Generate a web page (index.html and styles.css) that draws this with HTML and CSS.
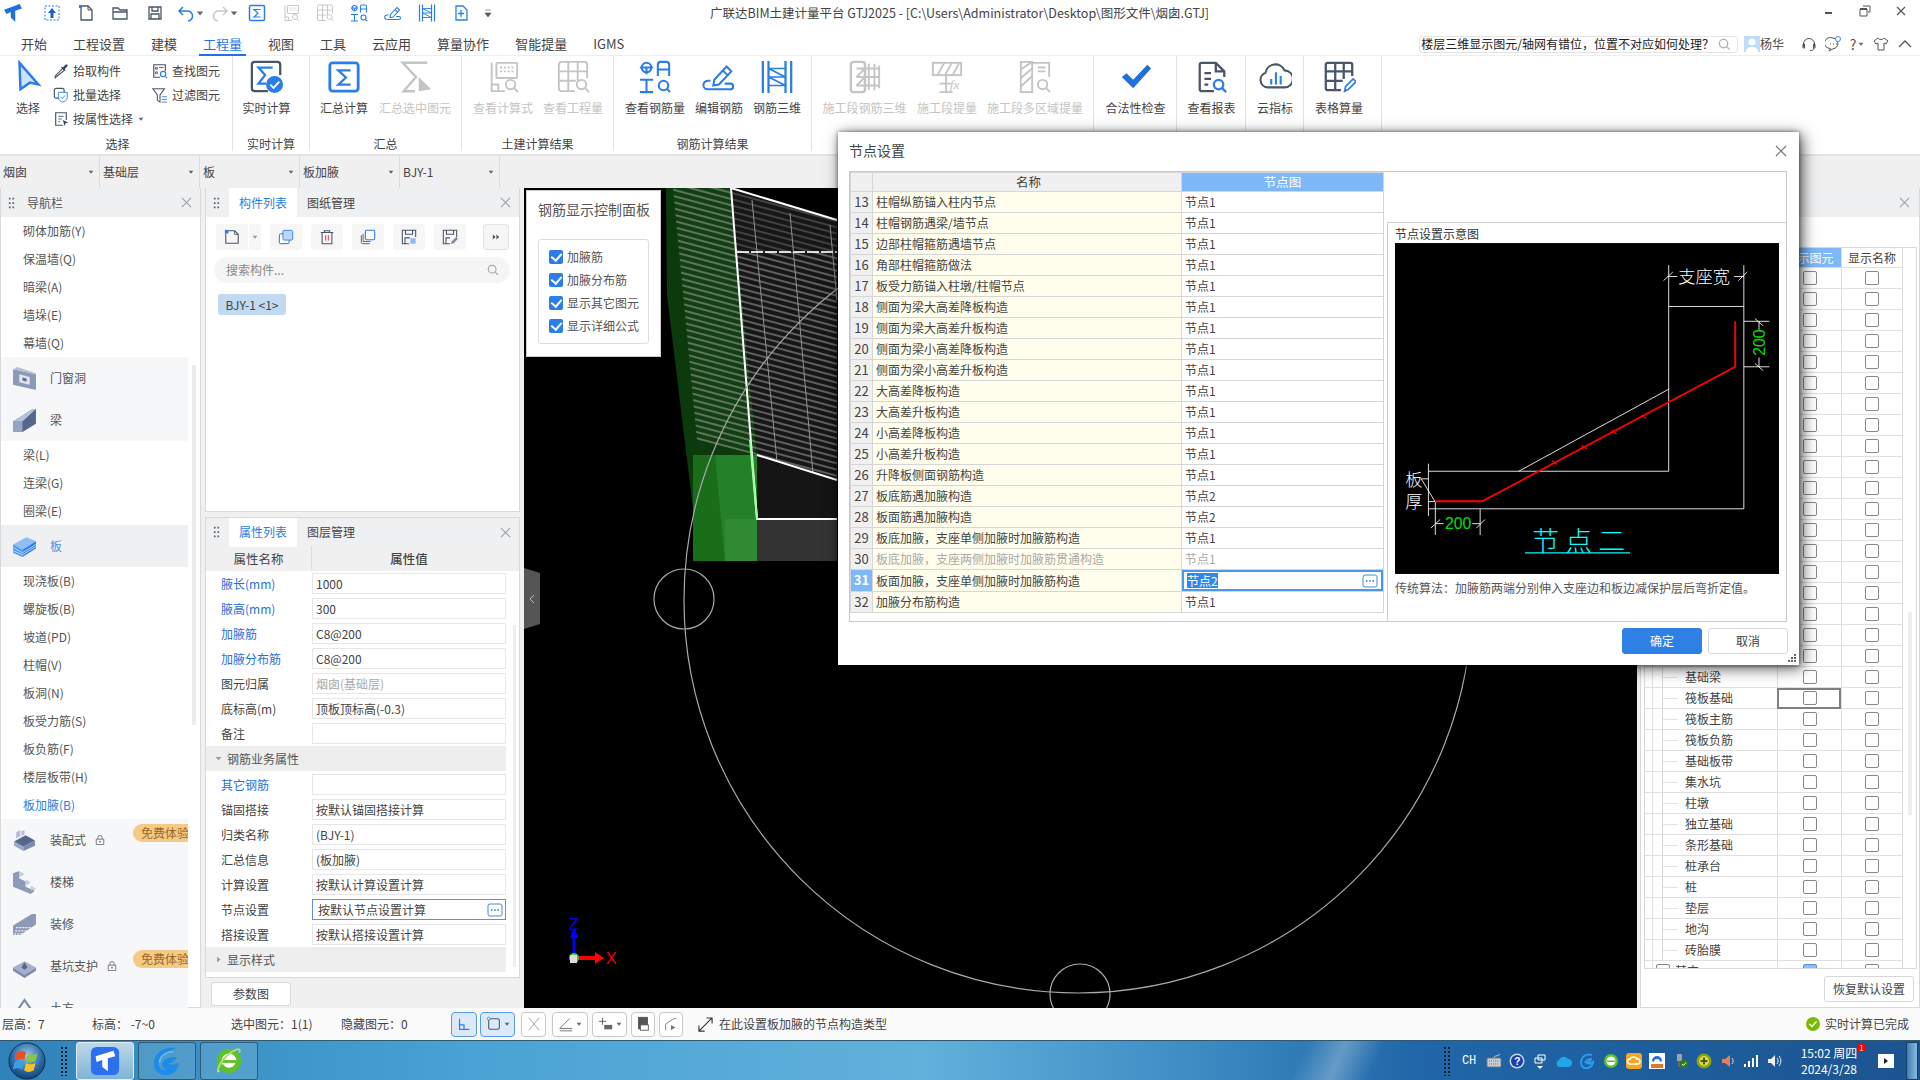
FILE: index.html
```html
<!DOCTYPE html>
<html lang="zh-CN">
<head>
<meta charset="utf-8">
<title>广联达BIM土建计量平台 GTJ2025</title>
<link rel="stylesheet" href="styles.css">
</head>
<body>
<svg class="sprite" aria-hidden="true">
  <symbol id="i-sigma" viewBox="0 0 36 36"><rect x="3" y="3" width="30" height="30" rx="3" fill="none" stroke="currentColor" stroke-width="3"/><path d="M25 11H12l8 7.500-8 7.500h13" fill="none" stroke="currentColor" stroke-width="2.400"/></symbol>
  <symbol id="i-calc" viewBox="0 0 36 36"><g fill="none" stroke="currentColor" stroke-width="2"><path d="M6 3v30h14M6 26h7v7"/><rect x="11" y="3" width="22" height="16" rx="1"/><path d="M15 8h14M15 12h14" stroke-dasharray="2 2"/><circle cx="26" cy="26" r="5"/><path d="M30 30l4 4"/></g></symbol>
  <symbol id="i-gridq" viewBox="0 0 36 36"><g fill="none" stroke="currentColor" stroke-width="2"><path d="M20 33H6a3 3 0 0 1-3-3V5a3 3 0 0 1 3-3h24a3 3 0 0 1 3 3v14M3 12h30M3 22h18M13 2v31M23 2v20"/><circle cx="27" cy="26" r="5"/><path d="M31 30l4 4"/></g></symbol>
  <symbol id="i-rebarq" viewBox="0 0 36 36"><g fill="none" stroke="currentColor" stroke-width="2.200"><circle cx="9" cy="8" r="5"/><path d="M2 8h14M9 8v7M21 17V5a3 3 0 0 1 3-3h6a3 3 0 0 1 3 3v12M21 10h12M2 21h14M9 21v13M2 34h14"/><circle cx="27" cy="27" r="5"/><path d="M31 31l3 3"/></g></symbol>
  <symbol id="i-edit" viewBox="0 0 36 36"><g fill="none" stroke="currentColor" stroke-width="2.200"><path d="M13 21l-1 6 6-1L31 12l-5-5zM22 11l5 5"/><path d="M9 22H6a4.500 4.500 0 0 0 0 9h24a3 3 0 0 0 0-6h-6"/></g></symbol>
  <symbol id="i-rebar3d" viewBox="0 0 36 36"><g fill="none" stroke="currentColor"><path d="M3 1v34M33 1v34" stroke-width="2.400"/><path d="M9 1v34M27 1v34" stroke-width="2.400"/><path d="M9 9h18M9 18h18M9 27h18M9 9l18 9M9 18l18 9" stroke-width="1.800"/></g></symbol>
  <symbol id="i-sec3d" viewBox="0 0 36 36"><g fill="none" stroke="currentColor" stroke-width="2"><rect x="3" y="2" width="15" height="32" rx="3" stroke-width="2.600"/><path d="M9 9h24M9 18h24M9 27h24M22 4v28M28 4v28M33 6v24M9 18l9-9M9 27l9-9"/></g></symbol>
  <symbol id="i-multi" viewBox="0 0 36 36"><g fill="none" stroke="currentColor" stroke-width="2"><rect x="3" y="2" width="12" height="32"/><path d="M3 10l12-8M3 19L15 9M3 28l12-11M15 3h18v15M21 8h8M21 12h8" /><circle cx="26" cy="26" r="5"/><path d="M30 30l4 4"/></g></symbol>
  <symbol id="i-sel-drop" viewBox="0 0 10 10"><path d="M1 3h8L5 8z" fill="currentColor"/></symbol>
  <symbol id="i-close" viewBox="0 0 12 12"><path d="M1 1l10 10M11 1L1 11" fill="none" stroke="currentColor" stroke-width="1.200"/></symbol>
  <symbol id="i-search" viewBox="0 0 14 14"><circle cx="6" cy="6" r="4.500" fill="none" stroke="currentColor" stroke-width="1.400"/><path d="M9.500 9.500l3 3" stroke="currentColor" stroke-width="1.400"/></symbol>
  <symbol id="i-grip" viewBox="0 0 8 14"><path d="M1 1h2v2H1zM5 1h2v2H5zM1 6h2v2H1zM5 6h2v2H5zM1 11h2v2H1zM5 11h2v2H5z" fill="currentColor"/></symbol>
  <symbol id="i-lock" viewBox="0 0 12 12"><path d="M1.500 5h9v6.500h-9zM3.500 5V3a2.500 2.500 0 0 1 5 0v2" fill="none" stroke="currentColor"/><circle cx="6" cy="8" r="1" fill="currentColor"/></symbol>
  <symbol id="i-dots" viewBox="0 0 16 14"><rect x="1" y="1" width="14" height="12" rx="2" fill="#fff" stroke="#3f8ae8"/><path d="M4 7h1.500M7.200 7h1.500M10.500 7H12" stroke="#2f6fd0" stroke-width="1.600"/></symbol>
</svg>

<div class="app">
  <header class="titlebar">
    <div class="quick">
      <svg class="q-logo" viewBox="0 0 18 18"><path d="M1 6l14-5 2 4-6 2v10l-4-4V8L3 10z" fill="#1f6fdc"/></svg>
      <span class="qa"><svg class="q-ic" viewBox="0 0 18 18"><rect x="2" y="2" width="14" height="14" fill="none" stroke="#2b7de9" stroke-dasharray="2 1.500"/><path d="M9 4l4 5h-2.500v5h-3V9H5z" fill="#1f5fbf"/></svg></span>
      <span class="qa"><svg class="q-ic" viewBox="0 0 18 18"><path d="M4 2h7l4 4v10H4z" fill="none" stroke="#4a5568" stroke-width="1.300"/><path d="M11 2v4h4" fill="none" stroke="#4a5568"/><path d="M2 1h3v3H2z" fill="#2b7de9"/></svg></span>
      <span class="qa"><svg class="q-ic" viewBox="0 0 18 18"><path d="M2 15V4h5l2 2h7v9z M2 8h14" fill="none" stroke="#4a5568" stroke-width="1.300"/></svg></span>
      <span class="qa qa-w"><svg class="q-ic" viewBox="0 0 18 18"><path d="M3 3h12v12H3zM6 3v4h6V3M5 15v-5h8v5" fill="none" stroke="#4a5568" stroke-width="1.300"/></svg></span>
      <span class="qa-drop qa-blue"><svg class="q-ic" viewBox="0 0 18 18"><path d="M6 3L2 7l4 4M2 7h8a5 5 0 0 1 1 10" fill="none" stroke="currentColor" stroke-width="1.500"/></svg><svg class="caret" viewBox="0 0 10 10"><use href="#i-sel-drop"/></svg></span>
      <span class="qa-drop qa-grey"><svg class="q-ic" viewBox="0 0 18 18"><path d="M12 3l4 4-4 4M16 7H8a5 5 0 0 0-1 10" fill="none" stroke="currentColor" stroke-width="1.500"/></svg><svg class="caret" viewBox="0 0 10 10"><use href="#i-sel-drop"/></svg></span>
      <span class="qa qa-blue"><svg class="q-ic" viewBox="0 0 36 36"><use href="#i-sigma"/></svg></span>
      <span class="qa qa-grey"><svg class="q-ic" viewBox="0 0 36 36"><use href="#i-calc"/></svg></span>
      <span class="qa qa-grey"><svg class="q-ic" viewBox="0 0 36 36"><use href="#i-gridq"/></svg></span>
      <span class="qa qa-blue"><svg class="q-ic" viewBox="0 0 36 36"><use href="#i-rebarq"/></svg></span>
      <span class="qa qa-blue"><svg class="q-ic" viewBox="0 0 36 36"><use href="#i-edit"/></svg></span>
      <span class="qa qa-blue"><svg class="q-ic" viewBox="0 0 36 36"><use href="#i-rebar3d"/></svg></span>
      <span class="qa qa-blue"><svg class="q-ic" viewBox="0 0 18 18"><path d="M4 2h7l4 4v10H4z" fill="none" stroke="currentColor" stroke-width="1.300"/><path d="M9 6v7M6 9.500h6" stroke="currentColor" stroke-width="1.300"/></svg></span>
      <svg class="q-more" viewBox="0 0 10 10"><path d="M2 2h6M2 5h6L5 9z" fill="#555" stroke="#555" stroke-width=".6"/></svg>
    </div>
    <div class="title">广联达BIM土建计量平台 GTJ2025 - [C:\Users\Administrator\Desktop\图形文件\烟囱.GTJ]</div>
    <div class="winctl">
      <svg class="win-ic" viewBox="0 0 12 12"><path d="M2 8h7" stroke="#555" stroke-width="2"/></svg>
      <svg class="win-ic" viewBox="0 0 12 12"><path d="M4 1h7v6H9M1 4h7v7H1z" fill="none" stroke="#555"/><path d="M1 4h7" stroke="#555" stroke-width="2"/></svg>
      <svg class="win-ic" viewBox="0 0 12 12"><path d="M2 2l8 8M10 2l-8 8" stroke="#555" stroke-width="1.200"/></svg>
    </div>
  </header>

  <nav class="menubar">
    <a class="tab">开始</a><a class="tab">工程设置</a><a class="tab">建模</a><a class="tab tab-on">工程量</a><a class="tab">视图</a><a class="tab">工具</a><a class="tab">云应用</a><a class="tab">算量协作</a><a class="tab">智能提量</a><a class="tab">IGMS</a>
    <div class="menu-right">
      <div class="askbox"><span class="ask-text">楼层三维显示图元/轴网有错位，位置不对应如何处理？</span><svg class="ask-ic" viewBox="0 0 14 14"><use href="#i-search"/></svg></div>
      <svg class="avatar" viewBox="0 0 16 16"><rect width="16" height="16" fill="#bcdcf8"/><circle cx="8" cy="6" r="3.500" fill="#fff"/><path d="M2 16c0-4 3-5 6-5s6 1 6 5z" fill="#fff"/></svg>
      <span class="user">杨华</span>
      <div class="help-ics">
        <span class="hi"><svg viewBox="0 0 16 16"><path d="M2.500 11V8a5.500 5.500 0 0 1 11 0v3M2 8h1.500v4H2zM12.500 8H14v4h-1.500zM13 12c0 2-2 2.500-4 2.500" fill="none" stroke="#555"/></svg></span>
        <span class="hi"><svg viewBox="0 0 16 16"><path d="M8 2a6 5.500 0 1 0-2.500 10.500L4 15l4-2.200A6 5.500 0 0 0 8 2z" fill="none" stroke="#555"/><path d="M5 8h1M8 8h1M11 8h1" stroke="#555"/><circle cx="13" cy="3" r="2.500" fill="#fff" stroke="#3f8ae8"/></svg></span>
        <span class="hi hi-q">?<svg class="caret" viewBox="0 0 10 10"><use href="#i-sel-drop"/></svg></span>
        <span class="hi"><svg viewBox="0 0 16 16"><path d="M5 2L1 5l2 3 2-1v7h6V7l2 1 2-3-4-3c-1 2-5 2-6 0z" fill="none" stroke="#555"/></svg></span>
        <span class="hi"><svg viewBox="0 0 16 16"><path d="M2 11l6-6 6 6" fill="none" stroke="#555" stroke-width="1.300"/></svg></span>
      </div>
    </div>
  </nav>

  <section class="ribbon">
    <div class="group g1">
      <div class="g-body">
        <div class="big">
          <svg class="big-ic" viewBox="0 0 36 36"><path d="M9 3l20 23-9-2-10 7z" fill="#cfe2fb" stroke="#2b7de9" stroke-width="2.600"/></svg>
          <span class="big-lb">选择</span>
        </div>
        <div class="sm-col">
          <div class="sm"><svg class="sm-ic" viewBox="0 0 18 18"><path d="M3 16l-1 1 1-3 8-8 2 2z" fill="none" stroke="#4a5568" stroke-width="1.300"/><path d="M9 5l4 4 1-1-1-1 3-3a1.400 1.400 0 0 0-2-2l-3 3-1-1z" fill="#3a4658"/></svg>拾取构件</div>
          <div class="sm"><svg class="sm-ic" viewBox="0 0 18 18"><rect x="1.500" y="1.500" width="11" height="11" rx="2" fill="none" stroke="#4a5568" stroke-width="1.300"/><path d="M6 6h10v6c0 3-3 4.500-5 5-2-.5-5-2-5-5z" fill="#fff" stroke="#2b7de9"/><path d="M8.500 11l2 2 3-3.500" fill="none" stroke="#2b7de9"/></svg>批量选择</div>
          <div class="sm"><svg class="sm-ic" viewBox="0 0 18 18"><path d="M11 16H3V2h12v8" fill="none" stroke="#4a5568" stroke-width="1.300"/><path d="M6 6h6M6 9h4M6 12h2" stroke="#4a5568"/><path d="M11 10l6 3-3 1-1 3z" fill="#3a4658"/></svg>按属性选择<svg class="caret" viewBox="0 0 10 10"><use href="#i-sel-drop"/></svg></div>
        </div>
        <div class="sm-col sm-col2">
          <div class="sm"><svg class="sm-ic" viewBox="0 0 18 18"><path d="M9 16H2V2h13v7" fill="none" stroke="#4a5568" stroke-width="1.300"/><path d="M4 5h2v2H4zM8 5h5M4 10h2v2H4z" fill="none" stroke="#4a5568"/><circle cx="12.500" cy="12.500" r="3" fill="none" stroke="#2b7de9" stroke-width="1.300"/><path d="M15 15l2 2" stroke="#2b7de9" stroke-width="1.300"/></svg>查找图元</div>
          <div class="sm"><svg class="sm-ic" viewBox="0 0 18 18"><path d="M1 2h13L9 9v8L6 15V9z" fill="none" stroke="#4a5568" stroke-width="1.200"/><path d="M11 11h6M11 14h6M11 17h6" stroke="#2b7de9"/></svg>过滤图元</div>
        </div>
      </div>
      <div class="g-lb g-lb1">选择</div>
    </div>

    <div class="group g2">
      <div class="g-body">
        <div class="big">
          <svg class="big-ic" viewBox="0 0 36 36"><path d="M19 33H5a3 3 0 0 1-3-3V5a3 3 0 0 1 3-3h24a3 3 0 0 1 3 3v11" fill="none" stroke="#4a5568" stroke-width="2.400"/><path d="M24 8H9l7 8-7 9h8" fill="none" stroke="#2b7de9" stroke-width="2.400"/><circle cx="26" cy="26" r="9" fill="#2b7de9"/><path d="M21.500 26l3.500 3.500 6-6.500" fill="none" stroke="#fff" stroke-width="2"/></svg>
          <span class="big-lb">实时计算</span>
        </div>
      </div>
      <div class="g-lb">实时计算</div>
    </div>

    <div class="group g3">
      <div class="g-body">
        <div class="big c-blue"><svg class="big-ic" viewBox="0 0 36 36"><use href="#i-sigma"/></svg><span class="big-lb lb-dark">汇总计算</span></div>
        <div class="big c-dis"><svg class="big-ic" viewBox="0 0 36 36"><path d="M31 3H5l14 15L6 33h12" fill="none" stroke="currentColor" stroke-width="2.600"/><path d="M22 18l13 13-13 2z" fill="currentColor"/></svg><span class="big-lb">汇总选中图元</span></div>
      </div>
      <div class="g-lb">汇总</div>
    </div>

    <div class="group g4">
      <div class="g-body">
        <div class="big c-dis"><svg class="big-ic" viewBox="0 0 36 36"><use href="#i-calc"/></svg><span class="big-lb">查看计算式</span></div>
        <div class="big c-dis"><svg class="big-ic" viewBox="0 0 36 36"><use href="#i-gridq"/></svg><span class="big-lb">查看工程量</span></div>
      </div>
      <div class="g-lb">土建计算结果</div>
    </div>

    <div class="group g5">
      <div class="g-body">
        <div class="big c-blue"><svg class="big-ic" viewBox="0 0 36 36"><use href="#i-rebarq"/></svg><span class="big-lb lb-dark">查看钢筋量</span></div>
        <div class="big c-blue"><svg class="big-ic" viewBox="0 0 36 36"><use href="#i-edit"/></svg><span class="big-lb lb-dark">编辑钢筋</span></div>
        <div class="big c-blue"><svg class="big-ic" viewBox="0 0 36 36"><use href="#i-rebar3d"/></svg><span class="big-lb lb-dark">钢筋三维</span></div>
      </div>
      <div class="g-lb">钢筋计算结果</div>
    </div>

    <div class="group g6">
      <div class="g-body">
        <div class="big c-dis"><svg class="big-ic" viewBox="0 0 36 36"><use href="#i-sec3d"/></svg><span class="big-lb">施工段钢筋三维</span></div>
        <div class="big c-dis"><svg class="big-ic" viewBox="0 0 36 36"><g fill="none" stroke="currentColor" stroke-width="2"><rect x="3" y="3" width="30" height="13"/><path d="M8 16l7-13M16 16l7-13M24 16l7-13M17 16v18M10 34h14M10 25h12"/></g><text x="21" y="31" class="svg-fx" fill="currentColor">fx</text></svg><span class="big-lb">施工段提量</span></div>
        <div class="big c-dis"><svg class="big-ic" viewBox="0 0 36 36"><use href="#i-multi"/></svg><span class="big-lb">施工段多区域提量</span></div>
      </div>
      <div class="g-lb"></div>
    </div>

    <div class="group g7">
      <div class="g-body">
        <div class="big"><svg class="big-ic" viewBox="0 0 36 36"><path d="M3 18l5-4 7 7L30 5l4 4-19 21z" fill="#1f6fdc"/></svg><span class="big-lb lb-dark">合法性检查</span></div>
      </div>
      <div class="g-lb"></div>
    </div>

    <div class="group g8">
      <div class="g-body">
        <div class="big"><svg class="big-ic" viewBox="0 0 36 36"><g fill="none" stroke="#4a5568" stroke-width="2.400"><path d="M20 33H7a2 2 0 0 1-2-2V5a2 2 0 0 1 2-2h15l9 9v6M22 3v9h9M10 14h7M10 20h7M10 26h4"/></g><circle cx="25" cy="26" r="5" fill="none" stroke="#2b7de9" stroke-width="2.400"/><path d="M29 30l4 4" stroke="#2b7de9" stroke-width="2.400"/></svg><span class="big-lb lb-dark">查看报表</span></div>
      </div>
      <div class="g-lb"></div>
    </div>

    <div class="group g9">
      <div class="g-body">
        <div class="big"><svg class="big-ic" viewBox="0 0 36 36"><path d="M10 29a8 8 0 0 1-2-15.500A10.500 10.500 0 0 1 28 11a9 9 0 0 1 0 18z" fill="none" stroke="#4a5568" stroke-width="2.200"/><path d="M14 26v-6M19 26V13M24 26v-9" stroke="#2b7de9" stroke-width="2.200"/></svg><span class="big-lb lb-dark">云指标</span></div>
      </div>
      <div class="g-lb"></div>
    </div>

    <div class="group g10">
      <div class="g-body">
        <div class="big"><svg class="big-ic" viewBox="0 0 36 36"><path d="M20 32H6a2 2 0 0 1-2-2V5a2 2 0 0 1 2-2h24a2 2 0 0 1 2 2v12M4 12h28M4 22h18M14 3v29M23 3v17" fill="none" stroke="#4a5568" stroke-width="2.400"/><path d="M24 33l1-5 8-8 3 3-8 8z" fill="none" stroke="#2b7de9" stroke-width="1.800"/></svg><span class="big-lb lb-dark">表格算量</span></div>
      </div>
      <div class="g-lb"></div>
    </div>
  </section>

  <div class="selectors">
    <div class="combo">烟囱<svg class="caret" viewBox="0 0 10 10"><use href="#i-sel-drop"/></svg></div>
    <div class="combo">基础层<svg class="caret" viewBox="0 0 10 10"><use href="#i-sel-drop"/></svg></div>
    <div class="combo">板<svg class="caret" viewBox="0 0 10 10"><use href="#i-sel-drop"/></svg></div>
    <div class="combo">板加腋<svg class="caret" viewBox="0 0 10 10"><use href="#i-sel-drop"/></svg></div>
    <div class="combo">BJY-1<svg class="caret" viewBox="0 0 10 10"><use href="#i-sel-drop"/></svg></div>
  </div>

  <main class="workspace">
    <aside class="panel nav">
      <div class="p-head">
        <svg class="grip" viewBox="0 0 8 14"><use href="#i-grip"/></svg>
        <span class="nav-title">导航栏</span>
        <svg class="p-close" viewBox="0 0 12 12"><use href="#i-close"/></svg>
      </div>
      <div class="nav-list">
        <div class="item">砌体加筋(Y)</div>
        <div class="item">保温墙(Q)</div>
        <div class="item">暗梁(A)</div>
        <div class="item">墙垛(E)</div>
        <div class="item">幕墙(Q)</div>
        <div class="grp"><svg class="grp-ic" viewBox="0 0 24 24"><path d="M1 3l22 5v15L1 18z" fill="#8c9ab8"/><path d="M7 8l10 2.500V18L7 15.500z" fill="#dfe4ee"/><path d="M1 3l4-2 18 6v1z" fill="#b5c0d6"/><path d="M10 11l4 1v3l-4-1z" fill="#5f6f92"/></svg>门窗洞</div>
        <div class="grp"><svg class="grp-ic" viewBox="0 0 24 24"><path d="M1 13L20 1h3v14L10 23H1z" fill="#56668c"/><path d="M1 13h9v10H1z" fill="#97a5c2"/><path d="M1 13L20 1h3L10 13z" fill="#b7c3da"/></svg>梁</div>
        <div class="item">梁(L)</div>
        <div class="item">连梁(G)</div>
        <div class="item">圈梁(E)</div>
        <div class="grp grp-on"><svg class="grp-ic" viewBox="0 0 24 24"><path d="M1 10L14 3l9 4-13 8z" fill="#8fbdf6"/><path d="M1 10l9 5v7l-9-4z" fill="#4e95ee"/><path d="M10 15l13-8v7l-13 8z" fill="#2f7de3"/><path d="M1 13l9 5 13-8M1 16l9 4 13-8" fill="none" stroke="#cfe2fb" stroke-width=".8"/></svg>板</div>
        <div class="item">现浇板(B)</div>
        <div class="item">螺旋板(B)</div>
        <div class="item">坡道(PD)</div>
        <div class="item">柱帽(V)</div>
        <div class="item">板洞(N)</div>
        <div class="item">板受力筋(S)</div>
        <div class="item">板负筋(F)</div>
        <div class="item">楼层板带(H)</div>
        <div class="item item-on">板加腋(B)</div>
        <div class="grp"><svg class="grp-ic" viewBox="0 0 24 24"><path d="M2 13l11-6 9 5-11 6z" fill="#56668c"/><path d="M2 13v4l9 5v-4z" fill="#9aa8c4"/><path d="M11 18v4l11-5v-5z" fill="#7b8bab"/><path d="M4 4l4-2v6L4 10zM9 3l3-1v4L9 8z" fill="#b5c0d6"/></svg>装配式<svg class="lock" viewBox="0 0 12 12"><use href="#i-lock"/></svg><span class="badge">免费体验</span></div>
        <div class="grp"><svg class="grp-ic" viewBox="0 0 24 24"><path d="M1 3l6-2v7l6 3v5l9 4-4 3L1 16z" fill="#8c9ab8"/><path d="M7 1l5 3-5 3zM13 9l5 3-5 3zM18 15l5 3-5 2z" fill="#c1cbdd"/></svg>楼梯</div>
        <div class="grp"><svg class="grp-ic" viewBox="0 0 24 24"><path d="M1 13L19 2h4v10L8 22H1z" fill="#8c9ab8"/><path d="M4 15h14M3 18h12M2 21h9" stroke="#eef1f6" stroke-width="1.200" stroke-dasharray="2 1"/></svg>装修</div>
        <div class="grp"><svg class="grp-ic" viewBox="0 0 24 24"><path d="M1 13l11-6 11 6-11 7z" fill="#a5b1c9"/><path d="M1 13v3l11 7v-3zM12 20v3l11-7v-3z" fill="#7b8bab"/><path d="M9 13l3-5 3 5-3 2z" fill="#56668c"/></svg>基坑支护<svg class="lock" viewBox="0 0 12 12"><use href="#i-lock"/></svg><span class="badge">免费体验</span></div>
        <div class="grp"><svg class="grp-ic" viewBox="0 0 24 24"><path d="M2 18L12 4l10 14z" fill="none" stroke="#7b8bab" stroke-width="2"/></svg>土方</div>
      </div>
      <div class="nav-scroll"></div>
    </aside>

    <div class="midcol">
      <section class="panel list-panel">
        <div class="p-head">
          <svg class="grip" viewBox="0 0 8 14"><use href="#i-grip"/></svg>
          <span class="p-tab p-tab-on">构件列表</span><span class="p-tab">图纸管理</span>
          <svg class="p-close" viewBox="0 0 12 12"><use href="#i-close"/></svg>
        </div>
        <div class="tools">
          <span class="tool tool-new"><svg viewBox="0 0 18 18"><path d="M4 2h8l4 4v10H2V4z" fill="none" stroke="#4a5568" stroke-width="1.200"/><path d="M12 2v4h4" fill="none" stroke="#4a5568"/><path d="M1 1h4v4H1z" fill="#2b7de9"/></svg></span>
          <span class="tool tool-drop"><svg class="caret" viewBox="0 0 10 10"><use href="#i-sel-drop"/></svg></span>
          <span class="tool"><svg viewBox="0 0 18 18"><rect x="1.500" y="5.500" width="11" height="11" rx="1.500" fill="#fff" stroke="#4a5568"/><rect x="5.500" y="1.500" width="11" height="11" rx="1.500" fill="#bcd6f8" stroke="#2b7de9"/></svg></span>
          <span class="tool"><svg viewBox="0 0 18 18"><path d="M2 4h14M6 4V2h6v2M3.500 4v12.500h11V4" fill="none" stroke="#4a5568" stroke-width="1.200"/><path d="M7.500 7v6M10.500 7v6" stroke="#e02020"/></svg></span>
          <span class="tool"><svg viewBox="0 0 18 18"><path d="M1.500 7v8a1.500 1.500 0 0 0 1.500 1.500h8M3.500 5.500V14H12" fill="none" stroke="#4a5568"/><rect x="6" y="1.500" width="10.500" height="10.500" rx="1.500" fill="#fff" stroke="#2b7de9" stroke-width="1.200"/></svg></span>
          <span class="tool"><svg viewBox="0 0 18 18"><path d="M9 16.500H1.500v-15h15V9M5 1.500V6h8V1.500M4.500 16.500V10H10" fill="none" stroke="#4a5568" stroke-width="1.200"/><rect x="10.500" y="10.500" width="6" height="6" fill="#8db9f3"/></svg></span>
          <span class="tool"><svg viewBox="0 0 18 18"><path d="M9 16.500H1.500v-15h15V9M5 1.500V6h8V1.500M4.500 16.500V10H9" fill="none" stroke="#4a5568" stroke-width="1.200"/><path d="M10 17l1-3 5-5 2 2-5 5z" fill="#7a879b"/></svg></span>
          <span class="tool tool-more"><svg viewBox="0 0 10 10"><path d="M1 2l3.500 3L1 8zM5.500 2L9 5 5.500 8z" fill="#555"/></svg></span>
        </div>
        <div class="p-search"><span>搜索构件...</span><svg viewBox="0 0 14 14"><use href="#i-search"/></svg></div>
        <div class="chip">BJY-1 &lt;1&gt;</div>
      </section>

      <section class="panel prop-panel">
        <div class="p-head">
          <svg class="grip" viewBox="0 0 8 14"><use href="#i-grip"/></svg>
          <span class="p-tab p-tab-on">属性列表</span><span class="p-tab">图层管理</span>
          <svg class="p-close" viewBox="0 0 12 12"><use href="#i-close"/></svg>
        </div>
        <div class="prop-head"><span>属性名称</span><span class="prop-head-v">属性值</span></div>
        <div class="prow"><span class="pn pn-b">腋长(mm)</span><span class="pv">1000</span></div>
        <div class="prow"><span class="pn pn-b">腋高(mm)</span><span class="pv">300</span></div>
        <div class="prow"><span class="pn pn-b">加腋筋</span><span class="pv">C8@200</span></div>
        <div class="prow"><span class="pn pn-b">加腋分布筋</span><span class="pv">C8@200</span></div>
        <div class="prow"><span class="pn">图元归属</span><span class="pv pv-dis">烟囱(基础层)</span></div>
        <div class="prow"><span class="pn">底标高(m)</span><span class="pv">顶板顶标高(-0.3)</span></div>
        <div class="prow"><span class="pn">备注</span><span class="pv"></span></div>
        <div class="pgroup"><svg class="pg-ar" viewBox="0 0 10 10"><use href="#i-sel-drop"/></svg>钢筋业务属性</div>
        <div class="prow"><span class="pn pn-b">其它钢筋</span><span class="pv"></span></div>
        <div class="prow"><span class="pn">锚固搭接</span><span class="pv">按默认锚固搭接计算</span></div>
        <div class="prow"><span class="pn">归类名称</span><span class="pv">(BJY-1)</span></div>
        <div class="prow"><span class="pn">汇总信息</span><span class="pv">(板加腋)</span></div>
        <div class="prow"><span class="pn">计算设置</span><span class="pv">按默认计算设置计算</span></div>
        <div class="prow"><span class="pn">节点设置</span><span class="pv pv-on">按默认节点设置计算<svg class="dots" viewBox="0 0 16 14"><use href="#i-dots"/></svg></span></div>
        <div class="prow"><span class="pn">搭接设置</span><span class="pv">按默认搭接设置计算</span></div>
        <div class="pgroup"><svg class="pg-ar pg-ar-r" viewBox="0 0 10 10"><use href="#i-sel-drop"/></svg>显示样式</div>
        <div class="prop-scroll"></div>
      </section>
      <div class="param-wrap"><button class="btn param">参数图</button></div>
    </div>

    <section class="canvas">
      <svg class="scene" viewBox="524 188 1113 820">
        <defs>
          <pattern id="hatch" width="6" height="6" patternUnits="userSpaceOnUse" patternTransform="rotate(15)"><path d="M0 3h6" stroke="#a8a8a8" stroke-width="1"/></pattern>
        </defs>
        <path d="M666 188h65l26 267H693v54l-26-214z" fill="#0d3a0d"/>
        <path d="M673 188h58l26 267-60-15z" fill="#123f12"/>
        <path d="M731 188l106 32v260l-80-25z" fill="#161616"/>
        <path d="M673 188h58l26 267-60-15z" fill="url(#hatch)"/>
        <path d="M731 188l106 32v31H737z" fill="url(#hatch)" opacity=".6"/>
        <path d="M737 252h100v228l-80-25z" fill="url(#hatch)"/>
        <path d="M752 200l25 262M790 213l23 261M830 225l7 75" stroke="#9a8f8a" fill="none"/>
        <path d="M757 455l80 25v39h-80z" fill="#151515"/>
        <path d="M757 519h80v42h-80z" fill="#333"/>
        <path d="M693 455h64v106h-64z" fill="#1a6e1a"/>
        <path d="M715 455h42v106h-32z" fill="#25802a"/>
        <path d="M725 519h32v42h-32z" fill="#2f8a33"/>
        <g fill="none" stroke="#fff">
          <path d="M731 188l26 331h80" stroke-width="2"/>
          <path d="M731 188l106 32M757 455l80 25" stroke-width="2"/>
          <path d="M737 252h100" stroke-width="2" stroke-dasharray="12 2" opacity=".85"/>
        </g>
        <path d="M750 440l7 79" stroke="#9dff9d" stroke-width="2"/>
        <g fill="none" stroke="#a9a9a9" stroke-width="1.200">
          <ellipse cx="1078" cy="600" rx="394" ry="393"/>
          <circle cx="684" cy="599" r="30"/>
          <circle cx="1080" cy="994" r="30"/>
        </g>
        <path d="M574 958v-28" stroke="#0000ff" stroke-width="3"/>
        <path d="M574 926l-4 12h8z" fill="#0000ff"/>
        <path d="M578 958h20" stroke="#f00" stroke-width="4"/>
        <path d="M604 958l-9-6v12z" fill="#f00"/>
        <circle cx="574" cy="958" r="5" fill="#2ecc40"/>
        <rect x="570" y="955" width="7" height="8" fill="#ddd"/>
        <text x="569" y="930" class="axis axis-z">Z</text>
        <text x="606" y="964" class="axis axis-x">X</text>
      </svg>

      <div class="rebar-panel">
        <h3>钢筋显示控制面板</h3>
        <div class="rebar-box">
          <label class="rb"><i class="chk"></i>加腋筋</label>
          <label class="rb"><i class="chk"></i>加腋分布筋</label>
          <label class="rb"><i class="chk"></i>显示其它图元</label>
          <label class="rb"><i class="chk"></i>显示详细公式</label>
        </div>
      </div>
      <div class="collapse"><svg viewBox="0 0 6 10"><path d="M5 1L1 5l4 4" fill="none" stroke="#bbb"/></svg></div>
    </section>

    <aside class="panel show-panel">
      <div class="p-head show-head"><svg class="p-close" viewBox="0 0 12 12"><use href="#i-close"/></svg></div>
      <div class="tbl">
        <div class="tr th"><div class="tn"></div><div class="tc th-on">显示图元</div><div class="tc">显示名称</div></div>
        <div class="tr"><div class="tn"></div><div class="tc"><i class="cb"></i></div><div class="tc"><i class="cb"></i></div></div>
        <div class="tr"><div class="tn"></div><div class="tc"><i class="cb"></i></div><div class="tc"><i class="cb"></i></div></div>
        <div class="tr"><div class="tn"></div><div class="tc"><i class="cb"></i></div><div class="tc"><i class="cb"></i></div></div>
        <div class="tr"><div class="tn"></div><div class="tc"><i class="cb"></i></div><div class="tc"><i class="cb"></i></div></div>
        <div class="tr"><div class="tn"></div><div class="tc"><i class="cb"></i></div><div class="tc"><i class="cb"></i></div></div>
        <div class="tr"><div class="tn"></div><div class="tc"><i class="cb"></i></div><div class="tc"><i class="cb"></i></div></div>
        <div class="tr"><div class="tn"></div><div class="tc"><i class="cb"></i></div><div class="tc"><i class="cb"></i></div></div>
        <div class="tr"><div class="tn"></div><div class="tc"><i class="cb"></i></div><div class="tc"><i class="cb"></i></div></div>
        <div class="tr"><div class="tn"></div><div class="tc"><i class="cb"></i></div><div class="tc"><i class="cb"></i></div></div>
        <div class="tr"><div class="tn"></div><div class="tc"><i class="cb"></i></div><div class="tc"><i class="cb"></i></div></div>
        <div class="tr"><div class="tn"></div><div class="tc"><i class="cb"></i></div><div class="tc"><i class="cb"></i></div></div>
        <div class="tr"><div class="tn"></div><div class="tc"><i class="cb"></i></div><div class="tc"><i class="cb"></i></div></div>
        <div class="tr"><div class="tn"></div><div class="tc"><i class="cb"></i></div><div class="tc"><i class="cb"></i></div></div>
        <div class="tr"><div class="tn"></div><div class="tc"><i class="cb"></i></div><div class="tc"><i class="cb"></i></div></div>
        <div class="tr"><div class="tn"></div><div class="tc"><i class="cb"></i></div><div class="tc"><i class="cb"></i></div></div>
        <div class="tr"><div class="tn"></div><div class="tc"><i class="cb"></i></div><div class="tc"><i class="cb"></i></div></div>
        <div class="tr"><div class="tn"></div><div class="tc"><i class="cb"></i></div><div class="tc"><i class="cb"></i></div></div>
        <div class="tr"><div class="tn"></div><div class="tc"><i class="cb"></i></div><div class="tc"><i class="cb"></i></div></div>
        <div class="tr"><div class="tn"></div><div class="tc"><i class="cb"></i></div><div class="tc"><i class="cb"></i></div></div>
        <div class="tr"><div class="tn leaf">基础梁</div><div class="tc"><i class="cb"></i></div><div class="tc"><i class="cb"></i></div></div>
        <div class="tr"><div class="tn leaf">筏板基础</div><div class="tc tc-sel"><i class="cb"></i></div><div class="tc"><i class="cb"></i></div></div>
        <div class="tr"><div class="tn leaf">筏板主筋</div><div class="tc"><i class="cb"></i></div><div class="tc"><i class="cb"></i></div></div>
        <div class="tr"><div class="tn leaf">筏板负筋</div><div class="tc"><i class="cb"></i></div><div class="tc"><i class="cb"></i></div></div>
        <div class="tr"><div class="tn leaf">基础板带</div><div class="tc"><i class="cb"></i></div><div class="tc"><i class="cb"></i></div></div>
        <div class="tr"><div class="tn leaf">集水坑</div><div class="tc"><i class="cb"></i></div><div class="tc"><i class="cb"></i></div></div>
        <div class="tr"><div class="tn leaf">柱墩</div><div class="tc"><i class="cb"></i></div><div class="tc"><i class="cb"></i></div></div>
        <div class="tr"><div class="tn leaf">独立基础</div><div class="tc"><i class="cb"></i></div><div class="tc"><i class="cb"></i></div></div>
        <div class="tr"><div class="tn leaf">条形基础</div><div class="tc"><i class="cb"></i></div><div class="tc"><i class="cb"></i></div></div>
        <div class="tr"><div class="tn leaf">桩承台</div><div class="tc"><i class="cb"></i></div><div class="tc"><i class="cb"></i></div></div>
        <div class="tr"><div class="tn leaf">桩</div><div class="tc"><i class="cb"></i></div><div class="tc"><i class="cb"></i></div></div>
        <div class="tr"><div class="tn leaf">垫层</div><div class="tc"><i class="cb"></i></div><div class="tc"><i class="cb"></i></div></div>
        <div class="tr"><div class="tn leaf">地沟</div><div class="tc"><i class="cb"></i></div><div class="tc"><i class="cb"></i></div></div>
        <div class="tr"><div class="tn leaf">砖胎膜</div><div class="tc"><i class="cb"></i></div><div class="tc"><i class="cb"></i></div></div>
        <div class="tr"><div class="tn tn-root"><i class="cb"></i>其它</div><div class="tc"><i class="cb cb-on"></i></div><div class="tc"><i class="cb"></i></div></div>
        <div class="tbl-scroll"></div>
      </div>
      <div class="show-foot"><button class="btn reset">恢复默认设置</button></div>
    </aside>
  </main>

  <footer class="statusbar">
    <span class="st st1">层高：7</span>
    <span class="st st2">标高： -7~0</span>
    <span class="st st3">选中图元：1(1)</span>
    <span class="st st4">隐藏图元：0</span>
    <span class="sb sb-on sb-1"><svg viewBox="0 0 18 18"><path d="M4 3v12h11M4 10h5v5" fill="none" stroke="#2b7de9" stroke-width="1.300"/></svg></span>
    <span class="sb sb-on sb-2"><svg viewBox="0 0 18 18"><rect x="3" y="3" width="12" height="12" rx="2" fill="none" stroke="#4a5568" stroke-width="1.200"/><circle cx="3" cy="3" r="1.600" fill="#fff" stroke="#2b7de9"/></svg><svg class="caret" viewBox="0 0 10 10"><use href="#i-sel-drop"/></svg></span>
    <span class="sb sb-3"><svg viewBox="0 0 18 18"><path d="M3 2l12 14M15 2L3 16" stroke="#9a9a9a" fill="none"/></svg></span>
    <span class="sb sb-4"><svg viewBox="0 0 18 18"><path d="M2 14L13 3M2 14h14" stroke="#6a6a6a" fill="none"/><path d="M2 16.500h14" stroke="#aaa" stroke-width="2"/></svg><svg class="caret" viewBox="0 0 10 10"><use href="#i-sel-drop"/></svg></span>
    <span class="sb sb-5"><svg viewBox="0 0 18 18"><path d="M5 2v8M1 6h8" stroke="#555" fill="none"/><rect x="7" y="10" width="9" height="5" fill="#666"/></svg><svg class="caret" viewBox="0 0 10 10"><use href="#i-sel-drop"/></svg></span>
    <span class="sb sb-6"><svg viewBox="0 0 18 18"><rect x="4" y="1.500" width="10" height="13" fill="#555" stroke="#555"/><rect x="6" y="10" width="9" height="6" fill="#fff" stroke="#555"/></svg></span>
    <span class="sb sb-7"><svg viewBox="0 0 18 18"><path d="M3 16V9l9-6h3" stroke="#777" fill="none"/><path d="M9 10l5 3-5 3z" fill="#777"/></svg></span>
    <svg class="st-exp" viewBox="0 0 16 16"><path d="M1 15L15 1M9 1h6v6M1 9v6h6" fill="none" stroke="#333" stroke-width="1.200"/></svg>
    <span class="st st5">在此设置板加腋的节点构造类型</span>
    <span class="st-done"><svg viewBox="0 0 14 14"><circle cx="7" cy="7" r="7" fill="#7cb905"/><path d="M3.500 7l2.500 2.500 4.500-5" fill="none" stroke="#fff" stroke-width="1.300"/></svg>实时计算已完成</span>
  </footer>

  <div class="taskbar">
    <svg class="orb" viewBox="0 0 40 40">
      <defs><radialGradient id="orbg" cx=".5" cy=".35" r=".7"><stop offset="0" stop-color="#9fc8ea"/><stop offset=".6" stop-color="#2a6aa6"/><stop offset="1" stop-color="#0e3a68"/></radialGradient></defs>
      <circle cx="20" cy="20" r="19" fill="url(#orbg)" stroke="#0d2f52"/>
      <path d="M9 11c4-2 7-2 10 0l-2 8c-3-2-6-2-10 0z" fill="#ec4f24"/>
      <path d="M21 12c3 2 6 2 10 0l-2 8c-4 2-7 2-10 0z" fill="#8cc63f"/>
      <path d="M7 21c4-2 7-2 10 0l-2 8c-3-2-6-2-10 0z" fill="#3aa0e4"/>
      <path d="M19 22c3 2 6 2 10 0l-2 8c-4 2-7 2-10 0z" fill="#f7c425"/>
    </svg>
    <i class="tb-grip"></i>
    <span class="tapp tapp-on"><svg viewBox="0 0 32 32"><rect x="1" y="1" width="30" height="30" rx="6" fill="#2c6ff0"/><path d="M6 11L25 5l2 6-8 2v14l-6-5v-7l-6 2z" fill="#fff"/></svg></span>
    <span class="tapp"><svg viewBox="0 0 32 32"><path d="M26 3C16-1 2 6 2 18c0 8 6 13 13 13 8 0 14-6 13-14-3 3-7 4-11 2 4-1 8-3 9-7-7-1-15 2-15 8 0 3 2 5 5 5-5 2-9-1-9-7 0-8 10-13 19-15z" fill="#1d8be8"/><path d="M23 6c-8 0-15 5-15 12" fill="none" stroke="#6cc0f5" stroke-width="1.500"/></svg></span>
    <span class="tapp"><svg viewBox="0 0 32 32"><circle cx="16" cy="16" r="13" fill="#5fc12a"/><circle cx="16" cy="16" r="8" fill="#fff"/><path d="M8 15h16v3H8z" fill="#5fc12a"/><path d="M24 17a8 8 0 0 1-15 3" fill="none" stroke="#5fc12a" stroke-width="2"/><path d="M6 26C2 31 4 20 12 12S30 0 27 7" fill="none" stroke="#a8e06a" stroke-width="2"/></svg></span>

    <div class="tray">
      <i class="tb-grip"></i>
      <span class="t-ch">CH</span>
      <span class="ti"><svg viewBox="0 0 16 16"><rect x="1" y="5" width="14" height="9" rx="1" fill="#c9ced4" stroke="#6c7680"/><path d="M3 8h10M3 11h10" stroke="#6c7680" stroke-dasharray="1 1"/><path d="M8 5c0-3 3-1 6-4" stroke="#ccc" fill="none"/></svg></span>
      <span class="ti"><svg viewBox="0 0 16 16"><circle cx="8" cy="8" r="7.500" fill="#cdd4dc"/><circle cx="8" cy="8" r="6" fill="#1a3fb0"/><text x="5.200" y="11.500" class="svg-q">?</text></svg></span>
      <span class="ti"><svg viewBox="0 0 16 16"><path d="M6 2h7v5H6zM3 5h7v5H3z" fill="#1f5f9e" stroke="#fff"/><path d="M5 13h6l-3 3z" fill="#fff"/></svg></span>
      <span class="ti"><svg viewBox="0 0 16 16"><path d="M4 14a3.500 3.500 0 0 1-1-6.800A5 5 0 0 1 12 6a4 4 0 0 1 0 8z" fill="#1fa7e8"/></svg></span>
      <span class="ti"><svg viewBox="0 0 16 16"><path d="M13 2C7 0 2 4 2 10c0 4 4 6 7 5 3-1 5-3 5-6-2 2-4 2-6 1 2-1 4-2 4-4-3 0-6 2-6 4" fill="none" stroke="#2a9bef" stroke-width="2"/></svg></span>
      <span class="ti"><svg viewBox="0 0 16 16"><circle cx="8" cy="8" r="7" fill="#5fc12a"/><circle cx="8" cy="8" r="4.500" fill="#fff"/><path d="M4 7.500h8V9H4z" fill="#5fc12a"/></svg></span>
      <span class="ti"><svg viewBox="0 0 16 16"><rect width="16" height="16" rx="3" fill="#f5a623"/><path d="M4 11a2.500 2.500 0 0 1 0-5 4 4 0 0 1 7 0 2.500 2.500 0 0 1 1 5z" fill="none" stroke="#fff" stroke-width="1.600"/></svg></span>
      <span class="ti"><svg viewBox="0 0 16 16"><rect width="16" height="16" fill="#fff"/><path d="M3 8a5 5 0 0 1 10 0l-2 1a3 3 0 0 0-6 0z" fill="#2a6fd0"/><path d="M2 11h12v4H2z" fill="#e8762a"/></svg></span>
      <span class="ti"><svg viewBox="0 0 16 16"><path d="M4 1h5v7H4z" fill="#9aa3ac"/><path d="M5 8h3v6H5z" fill="#606a74"/><circle cx="11" cy="11" r="4.500" fill="#2a7a2a"/><path d="M9 11l1.500 1.500L13 9.500" fill="none" stroke="#fff"/></svg></span>
      <span class="ti"><svg viewBox="0 0 16 16"><circle cx="8" cy="8" r="7.500" fill="#7ea80c"/><circle cx="8" cy="8" r="5" fill="#f3d04a"/><path d="M8 4.500v7M4.500 8h7" stroke="#2f6a10" stroke-width="2"/></svg></span>
      <span class="ti"><svg viewBox="0 0 16 16"><path d="M2 6h3l5-4v12l-5-4H2z" fill="#e97e5a"/><path d="M12 5c1.500 2 1.500 4 0 6" fill="none" stroke="#ddd"/></svg></span>
      <span class="ti"><svg viewBox="0 0 16 16"><path d="M1 11h2v3H1zM5 8h2v6H5zM9 5h2v9H9zM13 2h2v12h-2z" fill="#fff"/></svg></span>
      <span class="ti"><svg viewBox="0 0 16 16"><path d="M2 6h3l4-4v12l-4-4H2z" fill="#eee"/><path d="M11 5c1.500 2 1.500 4 0 6M13 3c2.500 3 2.500 7 0 10" fill="none" stroke="#eee"/></svg></span>
      <div class="clock"><span>15:02 周四</span><span>2024/3/28</span><i class="clock-badge">1</i></div>
      <span class="show-d"><i></i></span>
      <span class="glass"></span>
    </div>
  </div>

  <div class="dialog">
    <div class="d-title">节点设置<svg class="d-close" viewBox="0 0 12 12"><use href="#i-close"/></svg></div>
    <div class="d-body">
      <table class="d-table">
        <thead><tr><th class="c-no"></th><th class="c-name">名称</th><th class="c-val th-on">节点图</th></tr></thead>
        <tbody>
          <tr><td class="c-no">13</td><td class="c-name">柱帽纵筋锚入柱内节点</td><td class="c-val">节点1</td></tr>
          <tr><td class="c-no">14</td><td class="c-name">柱帽钢筋遇梁/墙节点</td><td class="c-val">节点1</td></tr>
          <tr><td class="c-no">15</td><td class="c-name">边部柱帽箍筋遇墙节点</td><td class="c-val">节点1</td></tr>
          <tr><td class="c-no">16</td><td class="c-name">角部柱帽箍筋做法</td><td class="c-val">节点1</td></tr>
          <tr><td class="c-no">17</td><td class="c-name">板受力筋锚入柱墩/柱帽节点</td><td class="c-val">节点1</td></tr>
          <tr><td class="c-no">18</td><td class="c-name">侧面为梁大高差降板构造</td><td class="c-val">节点1</td></tr>
          <tr><td class="c-no">19</td><td class="c-name">侧面为梁大高差升板构造</td><td class="c-val">节点1</td></tr>
          <tr><td class="c-no">20</td><td class="c-name">侧面为梁小高差降板构造</td><td class="c-val">节点1</td></tr>
          <tr><td class="c-no">21</td><td class="c-name">侧面为梁小高差升板构造</td><td class="c-val">节点1</td></tr>
          <tr><td class="c-no">22</td><td class="c-name">大高差降板构造</td><td class="c-val">节点1</td></tr>
          <tr><td class="c-no">23</td><td class="c-name">大高差升板构造</td><td class="c-val">节点1</td></tr>
          <tr><td class="c-no">24</td><td class="c-name">小高差降板构造</td><td class="c-val">节点1</td></tr>
          <tr><td class="c-no">25</td><td class="c-name">小高差升板构造</td><td class="c-val">节点1</td></tr>
          <tr><td class="c-no">26</td><td class="c-name">升降板侧面钢筋构造</td><td class="c-val">节点1</td></tr>
          <tr><td class="c-no">27</td><td class="c-name">板底筋遇加腋构造</td><td class="c-val">节点2</td></tr>
          <tr><td class="c-no">28</td><td class="c-name">板面筋遇加腋构造</td><td class="c-val">节点2</td></tr>
          <tr><td class="c-no">29</td><td class="c-name">板底加腋，支座单侧加腋时加腋筋构造</td><td class="c-val">节点1</td></tr>
          <tr class="r-dis"><td class="c-no">30</td><td class="c-name">板底加腋，支座两侧加腋时加腋筋贯通构造</td><td class="c-val">节点1</td></tr>
          <tr class="r-cur"><td class="c-no">31</td><td class="c-name">板面加腋，支座单侧加腋时加腋筋构造</td><td class="c-val"><span class="cur-val"><span class="cur-sel">节点2</span><svg class="dots" viewBox="0 0 16 14"><use href="#i-dots"/></svg></span></td></tr>
          <tr><td class="c-no">32</td><td class="c-name">加腋分布筋构造</td><td class="c-val">节点1</td></tr>
        </tbody>
      </table>
      <div class="d-side">
        <div class="d-preview">
          <div class="d-pv-title">节点设置示意图</div>
          <svg class="diagram" viewBox="44 328 1114 960">
            <rect x="44" y="328" width="1114" height="960" fill="#000"/>
            <g fill="none" stroke="#fff" stroke-width="2.500">
              <path d="M838 392v598H141M1056 392v707H141M838 512h218M141 968v152M161 1078v97M291 1100v75"/>
              <path d="M823 437l27-25M1040 437l26-25M835 425h28M1028 425h28"/>
              <path d="M1056 555h74M1056 687h74M1088 547l24 21M1088 677l24 21M1100 555v25M1100 660v27"/>
              <path d="M148 1155l27-25M280 1155l25-25M161 1142h24M268 1142h23"/>
              <path d="M403 990l435-238M120 1012l40 66M120 1012h21M141 1078h20"/>
            </g>
            <path d="M1031 555v132L297 1077H161" fill="none" stroke="#f00" stroke-width="5.500"/>
            <path d="M500 960l14 10M586 915l14 10M673 872l14 10M759 827l14 10" stroke="#f00" stroke-width="4"/>
            <text x="866" y="444" class="dg dg-w">支座宽</text>
            <text x="74" y="1034" class="dg dg-w">板</text>
            <text x="74" y="1097" class="dg dg-w">厚</text>
            <text x="189" y="1159" class="dg dg-g">200</text>
            <text x="1117" y="655" class="dg dg-g" transform="rotate(-90 1117 655)">200</text>
            <text x="442" y="1220" class="dg dg-c">节点二</text>
            <path d="M421 1227h305" stroke="#0ff" stroke-width="4"/>
          </svg>
          <div class="d-note">传统算法：加腋筋两端分别伸入支座边和板边减保护层后弯折定值。</div>
        </div>
      </div>
    </div>
    <div class="d-foot"><button class="btn btn-ok">确定</button><button class="btn btn-no">取消</button></div>
    <svg class="d-grip" viewBox="0 0 8 8"><path d="M6 0h2v2H6zM3 3h2v2H3zM6 3h2v2H6zM0 6h2v2H0zM3 6h2v2H3zM6 6h2v2H6z" fill="#666"/></svg>
  </div>
</div>
</body>
</html>
```

FILE: styles.css
```css
* { box-sizing: border-box; margin: 0; padding: 0; }
html, body { width: 1920px; height: 1080px; overflow: hidden; }
body { font: 12px/1.3 "Noto Sans CJK SC", "Noto Sans", sans-serif; color: #444; background: #f0f0f0; }
.sprite { position: absolute; width: 0; height: 0; }
svg { display: block; flex: none; }
i { font-style: normal; display: block; }
.app { position: relative; display: flex; flex-direction: column; width: 1920px; height: 1080px; overflow: hidden; }
.caret { width: 8px; height: 8px; color: #666; }

/* title bar */
.titlebar { display: flex; align-items: center; height: 33px; padding-bottom: 7px; background: #fff; }
.quick { display: flex; align-items: center; width: 494px; padding-left: 3px; }
.q-logo { width: 20px; height: 20px; margin-right: 12px; }
.qa { display: flex; justify-content: center; width: 34px; }
.qa-w { width: 35px; }
.q-ic { width: 18px; height: 18px; }
.qa-drop { display: flex; align-items: center; width: 34px; padding-left: 5px; gap: 1px; }
.qa-blue { color: #2b7de9; }
.qa-grey { color: #c8c8c8; }
.q-more { width: 10px; height: 10px; margin-left: 5px; }
.title { margin-left: 216px; font-size: 12.500px; color: #444; white-space: nowrap; }
.winctl { display: flex; margin-left: auto; gap: 24px; padding-right: 13px; margin-top: -4px; }
.win-ic { width: 12px; height: 12px; }

/* menu */
.menubar { display: flex; align-items: stretch; gap: 18px; height: 23px; padding-left: 17px; background: #fff; border-bottom: 1px solid #eee; }
.tab { padding: 0 4px; height: 23px; font-size: 13px; line-height: 22px; color: #444; white-space: nowrap; }
.tab-on { color: #1f73e0; border-bottom: 2px solid #1f73e0; }
.menu-right { display: flex; align-items: center; margin-left: auto; height: 22px; padding-right: 3px; }
.askbox { display: flex; justify-content: flex-end; align-items: center; width: 319px; height: 17px; border: 1px solid #e4e4e4; border-radius: 3px; overflow: hidden; }
.ask-text { flex: none; color: #222; white-space: nowrap; }
.ask-ic { width: 13px; height: 13px; margin: 0 6px 0 4px; color: #b0b0b0; }
.avatar { width: 16px; height: 16px; margin-left: 6px; }
.user { width: 37px; color: #444; }
.help-ics { display: flex; }
.hi { display: flex; justify-content: center; align-items: center; width: 24px; }
.hi svg { width: 16px; height: 16px; }
.hi-q { font-size: 14px; color: #555; gap: 2px; }
.hi-q .caret { width: 6px; height: 6px; }

/* ribbon */
.ribbon { display: flex; height: 100px; background: #fff; border-bottom: 2px solid #e4e4e4; }
.group { display: flex; flex-direction: column; height: 95px; border-right: 1px solid #e2e2e2; }
.g-body { display: grid; height: 80px; }
.g-lb { height: 15px; line-height: 16px; text-align: center; color: #444; white-space: nowrap; }
.g-lb1 { padding-left: 3px; }
.g1 { width: 233px; } .g1 .g-body { grid-template-columns: 56px 98px 1fr; }
.g2 { width: 77px; } .g2 .g-body { grid-template-columns: 67px; }
.g3 { width: 152px; } .g3 .g-body { grid-template-columns: 68px 74px; }
.g4 { width: 152px; } .g4 .g-body { grid-template-columns: 72px 68px; padding-left: 5px; }
.g5 { width: 198px; } .g5 .g-body { grid-template-columns: 62px 66px 50px; padding-left: 10px; }
.g6 { width: 282px; } .g6 .g-body { grid-template-columns: 85px 80px 96px; padding-left: 10px; }
.g7 { width: 83px; } .g7 .g-body { grid-template-columns: 83px; }
.g8 { width: 69px; } .g8 .g-body { grid-template-columns: 69px; }
.g9 { width: 58px; } .g9 .g-body { grid-template-columns: 58px; }
.g10 { width: 78px; } .g10 .g-body { grid-template-columns: 70px; }
.big { display: flex; flex-direction: column; align-items: center; padding-top: 4px; min-width: 0; }
.big-ic { width: 34px; height: 34px; }
.big-lb { height: 16px; margin-top: 6px; line-height: 16px; white-space: nowrap; color: #444; }
.c-blue { color: #2b7de9; }
.c-dis, .c-dis .big-lb { color: #c4c4c4; }
.sm-col { display: flex; flex-direction: column; padding-top: 3px; margin-left: -3px; }
.sm-col2 { margin-left: -2px; }
.sm { display: flex; align-items: center; gap: 4px; height: 24px; white-space: nowrap; color: #444; }
.sm-ic { width: 16px; height: 16px; }
.sm .caret { width: 6px; height: 6px; margin-left: 1px; }
.svg-fx { font: italic 14px "Liberation Serif", serif; }

/* selector row */
.selectors { display: flex; height: 32px; background: #f0f0f0; }
.combo { display: flex; align-items: center; justify-content: space-between; width: 100px; height: 32px; padding: 0 5px 0 3px; border-right: 1px solid #dcdcdc; }
.combo .caret { width: 6px; height: 6px; }

/* workspace */
.workspace { display: flex; height: 820px; background: #f0f0f0; }
.panel { position: relative; background: #fff; border: 1px solid #d9d9d9; }
.p-head { display: flex; align-items: center; height: 29px; background: #eff0f2; flex: none; }
.grip { width: 7px; height: 14px; margin-left: 7px; color: #666; }
.nav-title { margin-left: 12px; color: #555; }
.p-close { width: 11px; height: 11px; margin-left: auto; margin-right: 8px; color: #a0a0a0; }
.p-tab { display: flex; align-items: center; justify-content: center; width: 68px; height: 29px; color: #444; }
.p-tab-on { background: #fff; color: #2b7de9; margin-left: 9px; }

/* nav */
.nav { width: 201px; height: 820px; margin-right: 4px; border-top: 0; }
.nav-list { height: 791px; overflow: hidden; width: 187px; }
.item { height: 28px; line-height: 28px; padding-left: 22px; color: #555; white-space: nowrap; }
.item-on { color: #2b7de9; }
.grp { display: flex; align-items: center; height: 42px; padding-left: 11px; background: #f6f7f9; color: #555; position: relative; }
.grp-on { background: #eff0f2; color: #4a90e2; }
.grp-ic { width: 25px; height: 25px; margin-right: 13px; }
.lock { width: 10px; height: 10px; margin-left: 9px; color: #666; }
.badge { position: absolute; right: 0; top: 5px; width: 55px; height: 18px; padding-left: 8px; line-height: 18px; color: #9a6a24; background: #f5c986; border-radius: 9px 0 0 9px; white-space: nowrap; }
.nav-scroll { position: absolute; left: 191px; top: 177px; width: 4px; height: 360px; background: #ececec; }

/* mid column */
.midcol { display: flex; flex-direction: column; gap: 5px; width: 315px; margin-right: 4px; }
.list-panel { height: 324px; border-top: 0; }
.tools { display: flex; gap: 9px; padding: 7px 0 0 10px; height: 33px; }
.tool { display: flex; justify-content: center; align-items: center; width: 32px; height: 26px; background: #f6f6f6; border-radius: 3px; }
.tool svg { width: 16px; height: 16px; }
.tool-new { margin-right: -9px; border-radius: 3px 0 0 3px; }
.tool-drop { width: 12px; margin-left: 1px; border-radius: 0 3px 3px 0; }
.tool-drop .caret { width: 6px; height: 6px; color: #999; }
.tool-more { width: 26px; margin-left: 8px; border: 1px solid #e3e3e3; }
.tool-more svg { width: 8px; height: 8px; }
.p-search { display: flex; justify-content: space-between; align-items: center; width: 296px; height: 26px; margin: 7px 0 0 8px; padding: 0 11px 0 12px; background: #f5f5f5; border-radius: 13px; color: #888; }
.p-search svg { width: 12px; height: 12px; color: #aaa; }
.chip { width: 68px; height: 21px; margin: 11px 0 0 12px; line-height: 21px; text-align: center; background: #c2d9f2; border-radius: 3px; color: #444; }

.prop-panel { height: 461px; border-top: 1px solid #d9d9d9; }
.prop-panel .p-head { height: 28px; }
.prop-head { display: grid; grid-template-columns: 105px 195px; height: 25px; line-height: 25px; text-align: center; background: #f0f0f0; font-size: 12.500px; }
.prop-head-v { font-weight: 500; border-left: 1px solid #ddd; }
.prow { display: grid; grid-template-columns: 106px 194px; align-items: center; height: 25px; }
.pn { padding-left: 15px; color: #444; white-space: nowrap; }
.pn-b { color: #2a6fdc; }
.pv { display: flex; align-items: center; height: 21px; padding-left: 3px; border: 1px solid #e6e6e6; color: #444; white-space: nowrap; }
.pv-dis { color: #aaa; }
.pv-on { padding-left: 5px; border-color: #5f8fe0; justify-content: space-between; padding-right: 2px; }
.dots { width: 16px; height: 14px; }
.pgroup { display: flex; align-items: center; width: 300px; height: 25px; margin-bottom: 1px; background: #eeeeee; color: #555; }
.pg-ar { width: 7px; height: 7px; margin: 0 5px 0 9px; color: #999; }
.pg-ar-r { transform: rotate(-90deg); }
.prop-scroll { position: absolute; left: 307px; top: 107px; width: 3px; height: 342px; background: #eee; }
.param-wrap { padding: 0 0 0 6px; margin-top: -1px; }
.btn { font: inherit; color: #444; background: #fff; border: 1px solid #d8d8d8; border-radius: 3px; }
.param { width: 80px; height: 24px; }

/* canvas */
.canvas { position: relative; width: 1113px; height: 820px; margin-right: 3px; background: #000; overflow: hidden; }
.scene { position: absolute; left: 0; top: 0; width: 1113px; height: 820px; }
.axis { font: 16px "Liberation Sans", sans-serif; }
.axis-z { fill: #0000e0; }
.axis-x { fill: #f00000; }
.rebar-panel { position: absolute; left: 2px; top: 2px; width: 135px; height: 167px; background: #fff; border: 1px solid #ccc; }
.rebar-panel h3 { margin: 8px 0 0 11px; font-size: 14px; font-weight: 400; line-height: 20px; color: #555; white-space: nowrap; }
.rebar-box { width: 111px; height: 105px; margin: 20px 0 0 11px; padding: 5px 0 0 10px; border: 1px solid #ddd; border-radius: 3px; }
.rb { display: flex; align-items: center; gap: 4px; height: 23px; color: #555; white-space: nowrap; }
.chk { position: relative; width: 14px; height: 14px; background: #2b7de9; border-radius: 2px; }
.chk::after { content: ""; position: absolute; left: 4px; top: 1.500px; width: 5px; height: 8px; border: solid #fff; border-width: 0 2px 2px 0; transform: rotate(40deg); }
.collapse { position: absolute; left: 0; top: 380px; display: flex; align-items: center; width: 16px; height: 61px; padding-left: 5px; background: #555; clip-path: polygon(0 0, 100% 8%, 100% 92%, 0 100%); }
.collapse svg { width: 6px; height: 10px; }

/* right panel */
.show-panel { width: 280px; height: 820px; border-top: 0; }
.show-head { justify-content: flex-end; }
.show-head .p-close { margin-right: 9px; }
.tbl { position: relative; width: 273px; height: 722px; margin: 30px 0 0 3px; border: 1px solid #d9d9d9; overflow: hidden; }
.tr { display: grid; grid-template-columns: 132px 64px 62px; height: 21px; }
.th { height: 20.400px; }
.tn { padding-left: 40px; line-height: 20px; color: #444; border-bottom: 1px solid #e0e0e0; background: linear-gradient(#e0e0e0, #e0e0e0) 7px 0/1px 100% no-repeat; white-space: nowrap; }
.leaf { background: linear-gradient(#e0e0e0, #e0e0e0) 7px 0/1px 100% no-repeat, linear-gradient(#d8d8d8, #d8d8d8) 17px 0/1px 100% no-repeat, linear-gradient(#e4e4e4, #e4e4e4) 17px 10px/16px 1px no-repeat; }
.tn-root { display: flex; align-items: center; gap: 5px; padding-left: 11px; }
.tc { display: flex; justify-content: center; align-items: center; border-left: 1px solid #e0e0e0; border-bottom: 1px solid #e0e0e0; color: #444; white-space: nowrap; }
.tr .tc:last-child { border-right: 1px solid #e0e0e0; }
.th .tn { border-bottom: 0; background: none; }
.th-on { background: #7fb8f8; color: #fff; }
.tc-sel { outline: 2px solid #808080; outline-offset: -2px; }
.cb { width: 14px; height: 14px; border: 1px solid #888; border-radius: 2px; background: #fff; }
.cb-on { background: #8dbdf6; border-color: #5a8fd0; }
.tbl-scroll { position: absolute; right: 4px; top: 364px; width: 4px; height: 203px; background: #eee; }
.show-foot { display: flex; justify-content: flex-end; padding: 7px 5px 0 0; }
.reset { width: 90px; height: 26px; }

/* status bar */
.statusbar { display: flex; align-items: center; height: 32px; background: #fafafa; }
.st { white-space: nowrap; color: #444; }
.st1 { width: 92px; padding-left: 2px; }
.st2 { width: 139px; }
.st3 { width: 110px; }
.st4 { width: 110px; }
.sb { display: flex; align-items: center; justify-content: center; gap: 2px; height: 25px; margin-right: 4px; background: #fff; border: 1px solid #c8c8c8; border-radius: 4px; }
.sb svg { width: 16px; height: 16px; }
.sb .caret { width: 6px; height: 6px; }
.sb-on { background: #dce9fb; border-color: #5a9be8; }
.sb-1 { width: 26px; margin-right: 3px; } .sb-2 { width: 35px; margin-right: 6px; } .sb-3 { width: 25px; margin-right: 6px; }
.sb-4 { width: 36px; } .sb-5 { width: 35px; } .sb-6 { width: 24px; } .sb-7 { width: 24px; margin-right: 15px; }
.st-exp { width: 15px; height: 15px; margin-right: 6px; }
.st-done { display: flex; align-items: center; gap: 5px; margin-left: auto; padding-right: 11px; color: #444; white-space: nowrap; }
.st-done svg { width: 14px; height: 14px; }

/* taskbar */
.taskbar { display: flex; align-items: center; height: 40px; border-top: 1px solid #32586f; background: linear-gradient(115deg, transparent 67.500%, rgba(255,255,255,.28) 69.500%, transparent 71.500%), linear-gradient(90deg, #2f82b8 0, #4aa3d4 25%, #62b0dc 48%, #3d8dc4 62%, #2066a8 74%, #1c5490 100%); }
.orb { width: 38px; height: 38px; margin-left: 8px; }
.tb-grip { width: 8px; height: 30px; margin: 0 0 0 14px; background: radial-gradient(circle, #123 1px, transparent 1.200px) 0 0/4px 4px; }
.tapp { display: flex; justify-content: center; align-items: center; width: 58px; height: 38px; margin-left: 4px; border: 1px solid rgba(20,50,70,.6); border-radius: 3px; background: rgba(255,255,255,.12); }
.tb-grip + .tapp { margin-left: 8px; }
.tapp-on { background: linear-gradient(#bcd8ea, #7fb4d6); border-color: #dfeef8; }
.tapp svg { width: 30px; height: 30px; }
.tray { display: flex; align-items: center; margin-left: auto; height: 38px; }
.tray .tb-grip { margin: 0; }
.t-ch { width: 20px; margin-left: 11px; font: 12px "Liberation Mono", monospace; color: #fff; }
.ti { display: flex; justify-content: center; width: 23.400px; }
.ti svg { width: 16px; height: 16px; }
.svg-q { font: bold 10px "Liberation Sans", sans-serif; fill: #fff; }
.clock { position: relative; display: flex; flex-direction: column; align-items: center; width: 60px; margin-left: 13px; color: #fff; line-height: 16px; white-space: nowrap; }
.clock-badge { position: absolute; right: -7px; top: -2px; width: 9px; height: 9px; border-radius: 50%; background: #f00; color: #fff; font-size: 8px; line-height: 9px; text-align: center; }
.show-d { display: flex; justify-content: center; align-items: center; width: 16px; height: 14px; margin-left: 19px; background: #fff; }
.show-d i { width: 0; height: 0; border: 3px solid transparent; border-left: 4px solid #222; border-right: 0; }
.glass { width: 12px; height: 38px; margin: 0 2px 0 12px; background: linear-gradient(90deg, #3c7fb6, #8fb9d8); border: 1px solid #16406a; }

/* dialog */
.dialog { position: absolute; left: 838px; top: 132px; display: flex; flex-direction: column; width: 961px; height: 533px; padding: 0 12px 0 11px; background: #fff; box-shadow: 3px 3px 14px rgba(0,0,0,.7), 0 0 4px rgba(0,0,0,.5); }
.d-title { display: flex; justify-content: space-between; align-items: center; height: 39px; padding-bottom: 2px; font-size: 14px; color: #444; }
.d-close { width: 12px; height: 12px; margin-right: 0; color: #777; }
.d-body { display: flex; height: 451px; border: 1px solid #c9c9c9; }
.d-table { width: 533px; height: 418px; border-collapse: collapse; table-layout: fixed; flex: none; }
.d-table th, .d-table td { height: 21px; padding: 0; border: 1px solid #d6d6d6; font-weight: 400; white-space: nowrap; overflow: hidden; }
.d-table th { height: 19px; background: #f0f0f0; font-size: 12.500px; }
.d-table .c-no { width: 22px; background: #f0f0f0; font-size: 13px; text-align: center; }
.d-table .c-name { width: 309px; background: #fffdeb; padding-left: 3px; }
.d-table th.c-name { background: #f0f0f0; text-align: center; }
.d-table .c-val { width: 202px; background: #fff; padding-left: 3px; }
.d-table th.th-on { background: #7fb8f8; color: #fff; text-align: center; padding: 0; }
.r-dis td, .r-dis .c-name, .r-dis .c-val { color: #aaa; }
.r-dis .c-no { color: #444; }
.d-table .r-cur .c-no { background: #7fb8f8; color: #fff; font-weight: 700; }
.d-table .r-cur .c-val { padding: 0; }
.cur-val { display: flex; align-items: center; justify-content: space-between; height: 21px; padding: 0 3px 0 3px; border: 2px solid #4a98ee; }
.cur-sel { background: #2f88ee; color: #fff; line-height: 15px; }
.d-side { display: flex; flex-direction: column; flex: 1; padding: 50px 0 0 3px; }
.d-preview { flex: 1; border: 1px solid #cfcfcf; border-right-width: 0; border-bottom: 0; padding: 0 0 0 7px; }
.d-pv-title { height: 20px; line-height: 22px; color: #333; }
.diagram { width: 384px; height: 331px; }
.d-note { margin-top: 6px; color: #555; white-space: nowrap; }
.dg { font-family: "Noto Sans CJK SC", sans-serif; font-weight: 300; }
.dg-w { font-size: 50px; fill: #fff; }
.dg-g { font-size: 46px; fill: #00e000; font-family: "Liberation Sans", sans-serif; }
.dg-c { font-size: 78px; fill: #0ff; letter-spacing: 18px; }
.d-foot { display: flex; justify-content: flex-end; gap: 6px; padding-top: 6px; margin-right: -1px; }
.d-foot .btn { width: 80px; height: 26px; }
.btn-ok { background: #2f80e4; border-color: #2f80e4; color: #fff; }
.d-grip { position: absolute; right: 3px; bottom: 3px; width: 8px; height: 8px; }
```
